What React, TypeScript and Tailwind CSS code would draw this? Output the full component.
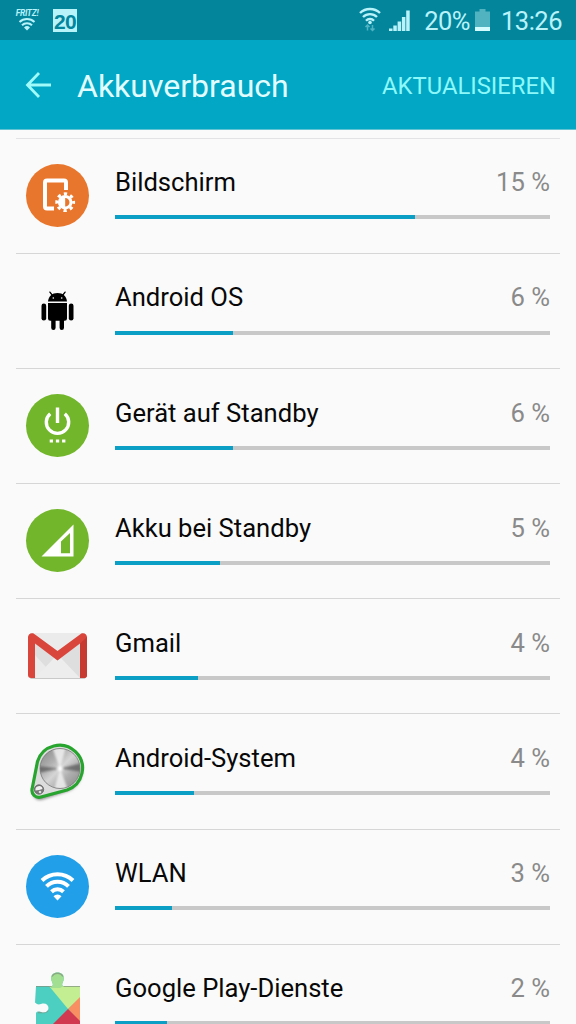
import React from 'react';

const ScreenIcon: React.FC = () => (
  <>
    <circle cx="41.5" cy="40.5" r="31.5" fill="#e8762c" />
    <path d="M38 53.500H31a2 2 0 0 1-2-2V27.500a2 2 0 0 1 2-2H48a2 2 0 0 1 2 2V35" fill="none" stroke="#fff" strokeWidth="4" />
    <circle cx="49.200" cy="47.200" r="8.400" fill="none" stroke="#fff" strokeWidth="3" strokeDasharray="3.300 3.300" strokeDashoffset="1.650" />
    <circle cx="49.200" cy="47.200" r="5.800" fill="#e8762c" stroke="#fff" strokeWidth="3" />
    <path d="M49.200 42a5.200 5.200 0 0 0 0 10.400z" fill="#fff" />
  </>
);

const AndroidIcon: React.FC = () => (
  <>
    <path d="M32 31.500c.4-5.400 4.200-8.600 9.500-8.600s9.100 3.200 9.500 8.600z" fill="#000" />
    <path d="M36.500 25.500l-2.600-3.400M46.500 25.500l2.600-3.400" stroke="#000" strokeWidth="1.300" strokeLinecap="round" />
    <circle cx="37.300" cy="28" r="0.800" fill="#fff" />
    <circle cx="45.700" cy="28" r="0.800" fill="#fff" />
    <path d="M32 33h19v15.500a2.300 2.300 0 0 1-2.300 2.300H48v7a2.200 2.200 0 0 1-4.400 0v-7h-4v7a2.200 2.200 0 0 1-4.400 0v-7h-.9a2.300 2.300 0 0 1-2.300-2.300z" fill="#000" />
    <rect x="25.500" y="33.500" width="4.700" height="17" rx="2.350" fill="#000" />
    <rect x="52.800" y="33.500" width="4.700" height="17" rx="2.350" fill="#000" />
  </>
);

const PowerIcon: React.FC = () => (
  <>
    <circle cx="41.5" cy="40.5" r="31.5" fill="#72b62b" />
    <path d="M34.200 28.700a11.200 11.200 0 1 0 14.600 0M41.500 22.500v15.500" fill="none" stroke="#fff" strokeWidth="3.400" />
    <path d="M33.700 55.900h3.300M39.900 55.900h3.300M46.100 55.900h3.300" stroke="#fff" strokeWidth="3" />
  </>
);

const SignalIcon: React.FC = () => (
  <>
    <circle cx="41.5" cy="40.5" r="31.5" fill="#72b62b" />
    <path d="M57.500 24.500V56.500H25.500zM54 33L45 41.500V53.200h9z" fill="#fff" fillRule="evenodd" />
  </>
);

const GmailIcon: React.FC = () => (
  <>
    <path d="M14 61.500h55.500v1.300a1.500 1.500 0 0 1-1.500 1.200H15.500a1.500 1.500 0 0 1-1.500-1.200z" fill="#c9c9c9" />
    <rect x="13" y="18" width="57" height="45" rx="3" fill="#ebebeb" />
    <path d="M19 28L41.500 45.500 64 28V63H40L19 40z" fill="#dedede" />
    <path d="M19 63L38 43l3.500 2.500L45 43 64 63z" fill="#ededed" />
    <path d="M12 22.500a4 4 0 0 1 4-4.300c1.300 0 2 .4 3 1.200L41.500 36 64 19.400c1-.8 1.700-1.200 3-1.200a4 4 0 0 1 4 4.300V60a3 3 0 0 1-3 3h-4V28.500L41.500 45.500 19 28.500V63h-4a3 3 0 0 1-3-3z" fill="#d9453b" />
    <path d="M64 28.500l7-6.500V60a3 3 0 0 1-3 3h-4z" fill="#c63a32" />
  </>
);

const SystemIcon: React.FC = () => (
  <>
    <defs>
      <filter id="shade" x="-20%" y="-20%" width="140%" height="140%">
        <feGaussianBlur stdDeviation="1.6" />
      </filter>
      <filter id="soft" x="-20%" y="-20%" width="140%" height="140%">
        <feGaussianBlur stdDeviation="1.1" />
      </filter>
      <clipPath id="knob">
        <circle cx="44" cy="38.500" r="20" />
      </clipPath>
      <linearGradient id="metal" x1="0" y1="0.100" x2="0.900" y2="1">
        <stop offset="0" stopColor="#8a8a8a" />
        <stop offset="0.300" stopColor="#b0b0b0" />
        <stop offset="0.500" stopColor="#d5d5d5" />
        <stop offset="0.700" stopColor="#b0b0b0" />
        <stop offset="1" stopColor="#8c8c8c" />
      </linearGradient>
    </defs>
    <path d="M23.500 26A22.500 22.500 0 1 1 51 59L25 67.500A7.500 7.500 0 0 1 15.500 58z" transform="translate(1.500 2)" fill="#888" filter="url(#shade)" />
    <path d="M21.500 31.500A23 23 0 1 1 51 60L25 67A7 7 0 0 1 16.200 58.500z" fill="#dcdcdc" stroke="#27a52e" strokeWidth="3.200" />
    <circle cx="44" cy="38.500" r="20" fill="url(#metal)" />
    <g clipPath="url(#knob)">
      <g filter="url(#soft)">
        <path d="M44 38.500L36 17h14zM44 38.500L38 60h14z" fill="#f4f4f4" opacity="0.800" />
        <path d="M44 38.500L22 36v7zM44 38.500L66 33v9z" fill="#555" opacity="0.700" />
        <circle cx="44" cy="38.500" r="2.500" fill="#fff" />
      </g>
    </g>
    <circle cx="44" cy="38.500" r="20" fill="none" stroke="#777" strokeWidth="0.800" />
    <circle cx="23" cy="59.500" r="4.700" fill="#777" stroke="#666" strokeWidth="0.800" />
    <path d="M19.500 60.500a3.500 3.500 0 0 1 7-1.500l-3.500 1z" fill="#f0f0f0" />
    <circle cx="24" cy="62" r="1.300" fill="#ddd" />
  </>
);

const WifiIcon: React.FC = () => (
  <>
    <circle cx="41.5" cy="40.5" r="31.5" fill="#219fe8" />
    <g fill="none" stroke="#fff" strokeWidth="4">
      <path d="M26 34.500a22.500 22.500 0 0 1 31 0" />
      <path d="M30.500 40.300a15.500 15.500 0 0 1 22 0" />
      <path d="M35.500 45.700a8.700 8.700 0 0 1 12 0" />
    </g>
    <path d="M41.500 54.500l-4-4.300a5.800 5.800 0 0 1 8 0z" fill="#fff" />
  </>
);

const PlayIcon: React.FC = () => (
  <>
    <defs>
      <clipPath id="puzzle">
        <path d="M20 25H35c2 0 2.200-1.500 1.400-3.300C33.500 16 36 11.500 41.500 11.500s8 4.500 5.100 10.200c-.8 1.800-.6 3.300 1.400 3.300H64V90H20V52c1-1.500 2.500-1.800 5-1 4 1.500 7.500-.5 7.500-4s-3.500-5.500-7.500-4c-2.500.8-4 .5-6-1.500z" />
      </clipPath>
    </defs>
    <g clipPath="url(#puzzle)">
      <path d="M19 10H64V90H19z" fill="#4ccfc0" />
      <path d="M33 25H64V37L52 48z" fill="#c3ee91" />
      <path d="M33 10H50V24L44 27H35z" fill="#a2df90" />
      <path d="M64 36L52 48 64 61z" fill="#f78f62" />
      <path d="M52 48L32 68V90H64V60z" fill="#d03950" />
      <path d="M20 25.200H35.500M47.500 25.200H64M36 15.500a6 5.500 0 0 1 11 0M22 51.500c4 0 8 1 10-2" fill="none" stroke="#80907f" strokeWidth="1.400" opacity="0.700" />
    </g>
  </>
);

const items = [
  { name: 'Bildschirm', percent: 15, bar: 300, icon: <ScreenIcon /> },
  { name: 'Android OS', percent: 6, bar: 118, icon: <AndroidIcon /> },
  { name: 'Gerät auf Standby', percent: 6, bar: 118, icon: <PowerIcon /> },
  { name: 'Akku bei Standby', percent: 5, bar: 105, icon: <SignalIcon /> },
  { name: 'Gmail', percent: 4, bar: 83, icon: <GmailIcon /> },
  { name: 'Android-System', percent: 4, bar: 79, icon: <SystemIcon /> },
  { name: 'WLAN', percent: 3, bar: 57, icon: <WifiIcon /> },
  { name: 'Google Play-Dienste', percent: 2, bar: 52, icon: <PlayIcon /> },
];

const StatusBar: React.FC = () => (
  <div className="flex h-10 items-center bg-[#03859c] pl-[15px] pr-[14px] text-[#b9f3fa]">
    <div className="flex w-[24px] flex-col items-center">
      <span className="text-[8.500px] font-bold italic leading-[9px] tracking-[-0.300px]">FRITZ!</span>
      <svg width="18" height="13" viewBox="0 0 18 13" fill="none" stroke="currentColor" strokeWidth="2">
        <path d="M1.500 4a11 11 0 0 1 15 0M4 7.300a7 7 0 0 1 10 0" />
        <path d="M9 12.500l-3-3a4.300 4.300 0 0 1 6 0z" fill="currentColor" stroke="none" />
      </svg>
    </div>
    <div className="ml-[14px] flex h-[23px] w-[24px] items-center justify-center bg-[#b9f3fa] pt-[2px] font-['Liberation_Sans',sans-serif] text-[21px] font-bold leading-none tracking-[-0.700px] text-[#03859c]">20</div>
    <svg className="ml-auto" width="54" height="26" viewBox="0 0 54 26">
      <g fill="none" stroke="currentColor" strokeWidth="2.400">
        <path d="M2 6a14.500 14.500 0 0 1 20 0" />
        <path d="M5 10a10 10 0 0 1 14 0" />
        <path d="M8 13.700a5.500 5.500 0 0 1 8 0" />
      </g>
      <circle cx="12" cy="15.500" r="1.800" fill="currentColor" />
      <path d="M9.500 23.500v-5M7.500 20l2-2 2 2M14.500 18v5M12.500 21.500l2 2 2-2" fill="none" stroke="#4fb3c3" strokeWidth="1.500" />
      <path d="M31 24v-2.500h3.500v2.500zM35.300 24v-5.500h3.500V24zM39.600 24v-9.500h3.500V24zM43.900 24V10h3.500v14zM48.200 24V3.500h3.500V24z" fill="currentColor" />
    </svg>
    <span className="ml-[12px] pt-[2px] text-[25.500px] leading-[38px] tracking-[-0.500px]">20%</span>
    <svg className="ml-[5px]" width="15" height="22" viewBox="0 0 15 22">
      <path d="M0 2.500h4.500V0h6v2.500H15V22H0z" fill="#52b3c0" />
      <path d="M0 18h15v4H0z" fill="#d5fbff" />
    </svg>
    <span className="ml-[11px] pt-[2px] text-[25.500px] leading-[38px] tracking-[-0.500px]">13:26</span>
  </div>
);

const App: React.FC = () => {
  return (
    <div className="h-[1024px] w-[576px] overflow-hidden bg-[#fafafa] font-[Roboto,sans-serif]">
      <StatusBar />

      <div className="flex h-[90px] items-center border-b border-[#62c3d2] bg-[#01a7c4] pl-[25px] pr-5">
        <svg width="27" height="26" viewBox="0 0 27 26" fill="none" stroke="#9ffaf9" strokeWidth="2.800">
          <path d="M14 1L2.500 13 14 25M2.500 13H26" />
        </svg>
        <h1 className="ml-[25px] pt-[3px] text-[32px] leading-10 text-[#e2fdff]">Akkuverbrauch</h1>
        <span className="ml-auto pt-[2px] text-[23.800px] leading-10 text-[#8df8fa]">AKTUALISIEREN</span>
      </div>

      {/* Consumer list */}
      <div className="mt-[7.600px] px-4">
        {items.map((item) => (
          <div key={item.name} className="flex h-[115.170px] border-t border-[#d6d6d6] pr-[10px] first:border-[#e3e3e6]">
            <svg className="mt-[16px] shrink-0" width="84" height="84" viewBox="0 0 84 84">
              {item.icon}
            </svg>
            <div className="ml-[15px] flex-1 pt-[27.600px]">
              <div className="flex justify-between text-[25.600px] leading-8">
                <span className="text-[#080808]">{item.name}</span>
                <span className="text-[#8a8a8a]">{item.percent} %</span>
              </div>
              <div className="mt-[17.200px] h-1 bg-[#c8c8c8]">
                <div className="h-full bg-[#0b9fc6]" style={{ width: item.bar }} />
              </div>
            </div>
          </div>
        ))}
      </div>
    </div>
  );
};

export default App;
